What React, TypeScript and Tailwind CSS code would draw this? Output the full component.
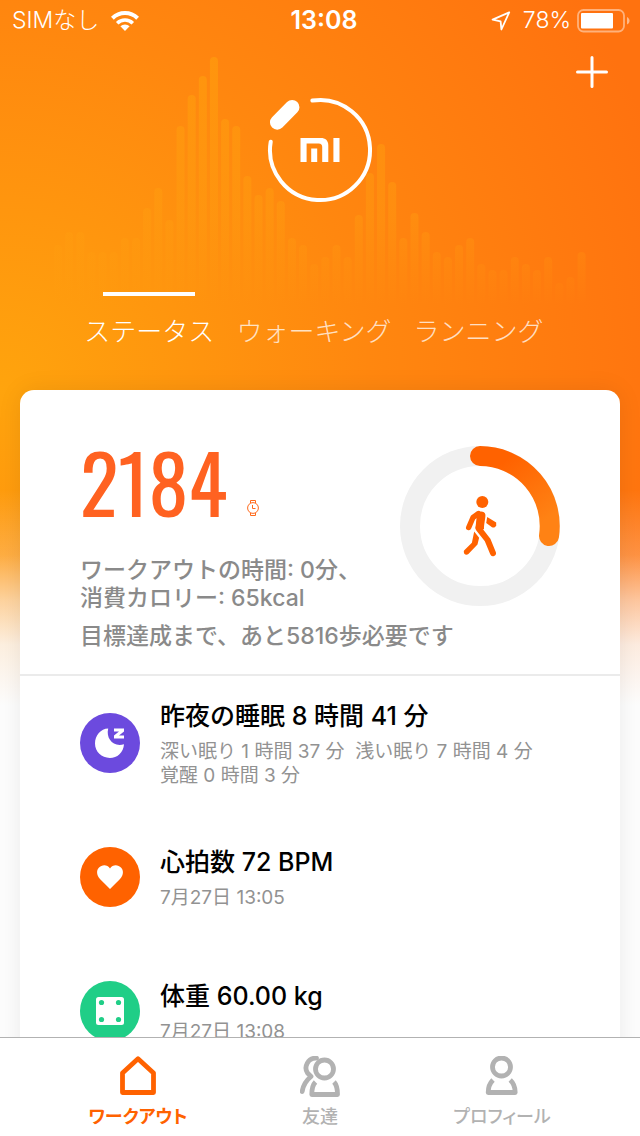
import type { ReactNode } from 'react';

const barTops = [
  245, 232, 232, 252, 252, 252, 238, 238, 208, 188, 220, 126, 95, 76, 57, 119, 126, 176, 195, 188, 201, 238, 245, 264,
  257, 245, 257, 215, 173, 144, 182, 238, 213, 232, 252, 257, 245, 238, 264, 270, 270, 257, 264, 270, 257, 283, 277, 252,
];

const tabs = ['ステータス', 'ウォーキング', 'ランニング'];

function WaveBars() {
  return (
    <svg className="absolute inset-x-0 top-0 w-full" viewBox="0 0 640 320" aria-hidden="true">
      <defs>
        <linearGradient id="bar" gradientUnits="userSpaceOnUse" x1="0" y1="50" x2="0" y2="305">
          <stop offset="0" stopColor="#ffa50c" stopOpacity="0.5" />
          <stop offset="0.65" stopColor="#ffa010" stopOpacity="0.36" />
          <stop offset="1" stopColor="#ffa010" stopOpacity="0" />
        </linearGradient>
      </defs>
      {barTops.map((top, i) => (
        <rect key={i} x={54 + i * 11.14} y={top} width="8" height={305 - top} rx="4" fill="url(#bar)" />
      ))}
    </svg>
  );
}

function StatusBar() {
  return (
    <div className="grid h-[41px] grid-cols-3 items-center pr-2.5 pl-3 text-[23px]">
      <div className="flex items-center gap-3 font-light">
        <span>SIMなし</span>
        <svg width="28" height="20" viewBox="0 0 28 20" fill="none" stroke="#fff" strokeWidth="4" aria-label="Wi-Fi">
          <path d="M1.4 7.2a18 18 0 0 1 25.2 0" />
          <path d="M6.2 12.2a11.2 11.2 0 0 1 15.6 0" strokeWidth="3.6" />
          <path d="M14 20l-4.6-4.7a6.6 6.6 0 0 1 9.2 0z" fill="#fff" stroke="none" />
        </svg>
      </div>
      <time className="pl-1.5 text-center text-[25px] font-semibold">13:08</time>
      <div className="flex items-center justify-end whitespace-nowrap">
        <svg className="mr-3" width="20" height="20" viewBox="0 0 20 20" fill="none" stroke="#fff" strokeWidth="1.8" strokeLinejoin="round" aria-hidden="true">
          <path d="M18.2 1.4L1.6 8.6l8 1.7.8 8.2z" />
        </svg>
        <span className="mr-1.5 font-light">78%</span>
        <svg width="53" height="24" viewBox="0 0 53 24" fill="none" aria-label="バッテリー">
          <rect x="1" y="1" width="46" height="21.5" rx="5.5" stroke="#fff" strokeOpacity="0.45" strokeWidth="1.8" />
          <rect x="4" y="4" width="32" height="15.5" rx="1" fill="#fff" />
          <path d="M50 8c3.4 1.6 3.4 6 0 7.6z" fill="#fff" fillOpacity="0.5" />
        </svg>
      </div>
    </div>
  );
}

function BandLogo() {
  return (
    <svg className="mx-auto mt-2" width="108" height="108" viewBox="0 0 108 108" fill="none" stroke="#fff" aria-label="mi">
      <path d="M46.4 4.6A50 50 0 1 1 4.7 45.8" strokeWidth="4" strokeLinecap="round" />
      <path d="M11.2 26.4L26.2 11.2" strokeWidth="14.5" strokeLinecap="round" />
      <g fill="#fff" stroke="none">
        <path d="M34.5 66V42h20.3c4.6 0 7.5 2.6 7.5 7.2V66h-6.1V51c0-2.4-1-3.6-3.5-3.6H40.6V66z" />
        <path d="M45.2 52.4h6V66h-6zM67.4 42h6.1v24h-6.1z" />
      </g>
    </svg>
  );
}

function StepRing() {
  return (
    <svg className="shrink-0" width="160" height="160" viewBox="0 0 160 160" fill="none" aria-hidden="true">
      <defs>
        <linearGradient id="ring" x1="0" y1="0" x2="0.6" y2="1">
          <stop offset="0.2" stopColor="#ff6200" />
          <stop offset="1" stopColor="#ff8214" />
        </linearGradient>
      </defs>
      <circle cx="80" cy="80" r="70" stroke="#f1f1f1" strokeWidth="20" />
      <path d="M80 10A70 70 0 0 1 149 90" stroke="url(#ring)" strokeWidth="20" strokeLinecap="round" />
      <g stroke="#ff6200" strokeLinecap="round" strokeLinejoin="round">
        <circle cx="82.3" cy="56" r="6" fill="#ff6200" stroke="none" />
        <path d="M78.5 67.5l-5.5 4-4.3 10" strokeWidth="5.4" />
        <path d="M77 68c1-3.4 8-3.4 8.4.8.2 3.4-1.6 9.6-1.4 14.4L75.4 82.4z" fill="#ff6200" stroke="none" />
        <path d="M81 69l-2.5 13.4L87.6 94l5.4 13.2" strokeWidth="6" />
        <path d="M87.2 71l9 5.6v2.6c-.6 2-2.6 3-4.2 2l-5.8-4.2z" fill="#ff6200" stroke="none" />
        <path d="M74.2 85.5l4.9 6.2-1.6 6.7L68.4 108c-1.6 1.4-4.6 1-4.6-2.2 0-1 .4-1.4 1-2l7.1-7z" fill="#ff6200" stroke="none" />
      </g>
    </svg>
  );
}

function WatchIcon() {
  return (
    <svg width="12" height="16" viewBox="0 0 12 16" fill="none" stroke="#ff6a1c" aria-hidden="true">
      <circle cx="6" cy="8" r="5.4" />
      <path d="M3.5 3V.5h5V3M3.5 13v2.5h5V13M5.5 5v3.5H8.5" />
    </svg>
  );
}

type RecordProps = { icon: ReactNode; color: string; title: string; lines: string[] };

function RecordRow({ icon, color, title, lines }: RecordProps) {
  return (
    <li className="flex min-h-[134px] items-center gap-5 px-15">
      <div className={`flex size-15 shrink-0 items-center justify-center rounded-full ${color}`}>{icon}</div>
      <div>
        <h2 className="text-[25px] leading-9 font-medium text-black">{title}</h2>
        <p className="mt-1.5 text-[19px] leading-6 font-normal whitespace-pre text-[#929292]">{lines.join('\n')}</p>
      </div>
    </li>
  );
}

const records: RecordProps[] = [
  {
    color: 'bg-[#6c4ade]',
    title: '昨夜の睡眠 8 時間 41 分',
    lines: ['深い眠り 1 時間 37 分  浅い眠り 7 時間 4 分', '覚醒 0 時間 3 分'],
    icon: (
      <svg width="30" height="30" viewBox="0 0 30 30" fill="#fff" aria-hidden="true">
        <path d="M13.2.6C10.6 10.5 18.5 19.6 29 16.2 28.4 24.6 22.2 30 14.8 30 6.6 30 0 23.8 0 15.6 0 7.4 5.8.8 13.2.6z" />
        <path d="M19 .5h10v3l-5 4h5v3H19v-3l5-4h-5z" />
      </svg>
    ),
  },
  {
    color: 'bg-[#ff6200]',
    title: '心拍数 72 BPM',
    lines: ['7月27日 13:05'],
    icon: (
      <svg width="26" height="24" viewBox="0 0 26 24" fill="#fff" aria-hidden="true">
        <path d="M13 24L3.2 14.2C-.8 10-.6 5.4 1.8 2.8 5-.8 10.4-.6 13 3.4 15.6-.6 21-.8 24.2 2.8c2.4 2.6 2.6 7.2-1.4 11.4z" />
      </svg>
    ),
  },
  {
    color: 'bg-[#20ce87]',
    title: '体重 60.00 kg',
    lines: ['7月27日 13:08'],
    icon: (
      <svg width="28" height="28" viewBox="0 0 28 28" fill="#20ce87" aria-hidden="true">
        <rect width="28" height="28" rx="2.5" fill="#fff" />
        <circle cx="5.5" cy="5.5" r="2.6" />
        <circle cx="22.5" cy="5.5" r="2.6" />
        <circle cx="5.5" cy="22.5" r="2.6" />
        <circle cx="22.5" cy="22.5" r="2.6" />
      </svg>
    ),
  },
];

const navItems = [
  {
    label: 'ワークアウト',
    icon: <path d="M4.5 17L20 2.8 35.5 17V36.5h-31z" />,
  },
  {
    label: '友達',
    icon: (
      <>
        <circle cx="24.5" cy="13" r="9" />
        <path d="M15.5 26C12.5 29 11.8 33 11.8 38.5h25.7C37.5 33 36.8 29 34 26" />
        <path d="M16.5 2.2C8 1.5 3.5 11 7.5 17l3.5 3.5C5.500 25 3 30 2.200 35.500" strokeLinecap="round" />
      </>
    ),
  },
  {
    label: 'プロフィール',
    icon: (
      <>
        <circle cx="19.5" cy="11" r="9" />
        <path d="M11 24C7.5 27.5 6.2 31 6.2 36.5h27C33.2 31 32 27.5 28.2 24" />
      </>
    ),
  },
];

export default function App() {
  return (
    <div className="flex h-screen flex-col bg-white font-['Inter','Noto_Sans_CJK_JP',sans-serif]">
      <main className="min-h-0 flex-1 overflow-y-auto [scrollbar-width:none]">
        <div className="relative bg-[linear-gradient(to_bottom,rgba(253,253,253,0)_490px,rgba(253,253,253,0.22)_555px,rgba(253,253,253,0.6)_600px,rgba(253,253,253,0.88)_645px,#fdfdfd_705px),radial-gradient(circle_at_0_390px,#ffa40d_0,#ff870f_370px,#ff720f_700px)]">
          <WaveBars />

          {/* Header */}
          <header className="relative text-white">
            <StatusBar />
            <div className="flex justify-end pt-[15px] pr-8">
              <button type="button" aria-label="追加" className="size-8">
                <svg width="32" height="32" viewBox="0 0 32 32" stroke="#fff" strokeWidth="3" strokeLinecap="round">
                  <path d="M16 1.5v29M1.5 16h29" />
                </svg>
              </button>
            </div>
            <BandLogo />
            <div className="mt-[88px] flex justify-center gap-[22px] pr-3" role="tablist">
              {tabs.map((tab, i) => (
                <button
                  key={tab}
                  type="button"
                  role="tab"
                  aria-selected={i === 0}
                  className="flex flex-col items-center gap-[18px] text-[26px] leading-9 font-light"
                >
                  <span className={`h-1 w-[92px] ${i === 0 ? 'bg-white' : ''}`} />
                  <span className={i === 0 ? '' : 'text-white/75'}>{tab}</span>
                </button>
              ))}
            </div>
          </header>

          {/* Activity card */}
          <section className="relative mx-5 mt-10 rounded-t-[14px] bg-white shadow-[0_0_24px_rgba(0,0,0,0.08)]">
            <div className="border-b-2 border-[#ebebeb] px-15 pt-14 pb-6 text-[23px] leading-7 font-medium text-[#8a8a8a]">
              <div className="flex items-start justify-between">
                <div>
                  <div className="flex items-end gap-5">
                    <span className="font-['Oswald','Roboto_Condensed','Liberation_Sans_Narrow','Inter',sans-serif] text-[80px] leading-[70px] font-normal text-[#ff6221]">
                      2184
                    </span>
                    <WatchIcon />
                  </div>
                  <p className="mt-10">
                    ワークアウトの時間: 0分、
                    <br />
                    消費カロリー: 65kcal
                  </p>
                </div>
                <StepRing />
              </div>
              <p className="mt-[10px]">目標達成まで、あと5816歩必要です</p>
            </div>
            <ul>
              {records.map((record) => (
                <RecordRow key={record.title} {...record} />
              ))}
            </ul>
          </section>
        </div>
      </main>

      {/* Bottom navigation */}
      <nav className="grid h-[99px] shrink-0 grid-cols-3 border-t border-[#b2b2b2] bg-white px-[47px]">
        {navItems.map((item, i) => (
          <button
            key={item.label}
            type="button"
            className={`flex flex-col items-center pt-[18px] text-lg leading-6 [font-feature-settings:'palt'] ${i === 0 ? 'font-semibold text-[#ff6200]' : 'font-medium text-[#b2b2b2]'}`}
          >
            <svg width="40" height="41" viewBox="0 0 40 41" fill="none" stroke="currentColor" strokeWidth="4.8" strokeLinejoin="round" aria-hidden="true">
              {item.icon}
            </svg>
            <span className="mt-2">{item.label}</span>
          </button>
        ))}
      </nav>
    </div>
  );
}
